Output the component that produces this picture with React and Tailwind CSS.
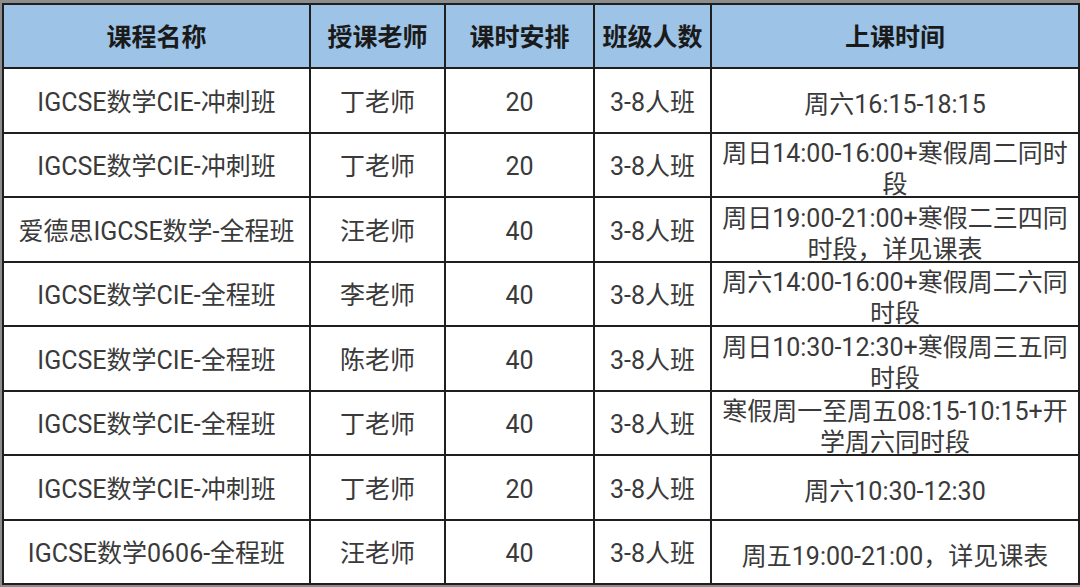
const headers = ['课程名称', '授课老师', '课时安排', '班级人数', '上课时间'];

const rows = [
  ['IGCSE数学CIE-冲刺班', '丁老师', '20', '3-8人班', ['周六16:15-18:15']],
  ['IGCSE数学CIE-冲刺班', '丁老师', '20', '3-8人班', ['周日14:00-16:00+寒假周二同时', '段']],
  ['爱德思IGCSE数学-全程班', '汪老师', '40', '3-8人班', ['周日19:00-21:00+寒假二三四同', '时段，详见课表']],
  ['IGCSE数学CIE-全程班', '李老师', '40', '3-8人班', ['周六14:00-16:00+寒假周二六同', '时段']],
  ['IGCSE数学CIE-全程班', '陈老师', '40', '3-8人班', ['周日10:30-12:30+寒假周三五同', '时段']],
  ['IGCSE数学CIE-全程班', '丁老师', '40', '3-8人班', ['寒假周一至周五08:15-10:15+开', '学周六同时段']],
  ['IGCSE数学CIE-冲刺班', '丁老师', '20', '3-8人班', ['周六10:30-12:30']],
  ['IGCSE数学0606-全程班', '汪老师', '40', '3-8人班', ['周五19:00-21:00，详见课表']]
];

const rowHeights = ['h-[65px]', 'h-[64px]', 'h-[65px]', 'h-[64px]', 'h-[65px]', 'h-[64px]', 'h-[65px]', 'h-[64px]'];

export default function App() {
  return (
    <div className="h-[587px] w-[1080px] overflow-hidden bg-[#8c8c8c] pl-[2px] pt-[3px] font-['Roboto','Noto_Sans_CJK_SC',sans-serif]">
      <table className="w-[1076px] table-fixed border-collapse bg-white text-[25px] text-[#3a3a3a]">
        <colgroup>
          <col className="w-[307px]" />
          <col className="w-[135px]" />
          <col className="w-[149px]" />
          <col className="w-[117px]" />
          <col className="w-[368px]" />
        </colgroup>
        <thead>
          <tr className="h-[64px] bg-[#9dc3e6]">
            {headers.map((h) => (
              <th
                key={h}
                className="border-2 border-[#1f1f1f] p-0 pt-1 text-center align-middle font-bold text-[#1a1a1a]"
              >
                {h}
              </th>
            ))}
          </tr>
        </thead>
        <tbody>
          {rows.map((row, i) => (
            <tr key={i} className={rowHeights[i]}>
              {row.slice(0, 4).map((cell, j) => (
                <td
                  key={j}
                  className="whitespace-nowrap border-2 border-[#1f1f1f] p-0 pt-1 text-center align-middle"
                >
                  {cell}
                </td>
              ))}
              <td className="border-2 border-[#1f1f1f] p-0 text-center align-middle">
                <div className="flex h-[60px] flex-col items-center justify-center overflow-visible pt-2 leading-[31px]">
                  {row[4].map((line) => (
                    <span key={line} className="whitespace-nowrap">
                      {line}
                    </span>
                  ))}
                </div>
              </td>
            </tr>
          ))}
        </tbody>
      </table>
    </div>
  );
}
